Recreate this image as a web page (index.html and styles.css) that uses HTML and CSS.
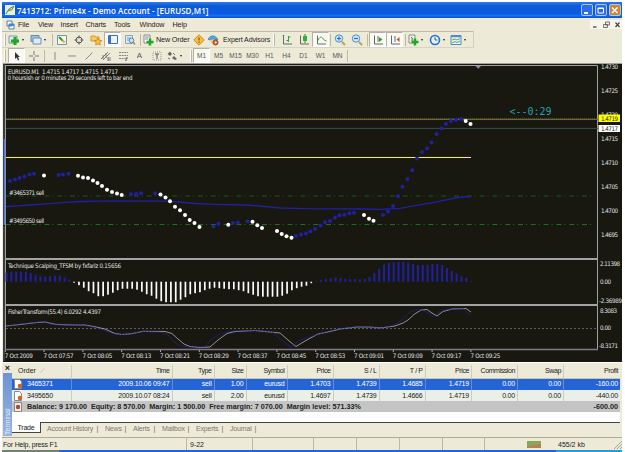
FILE: index.html
```
<!DOCTYPE html>
<html lang="en">
<head>
    <meta charset="UTF-8">
    <title>7413712: Prime4x - Demo Account - [EURUSD,M1]</title>
    <link rel="stylesheet" href="styles.css">
</head>
<body>
<div class="window">
    <header class="titlebar">
        <svg class="app-icon" width="10" height="10" viewBox="0 0 10 10"><rect width="10" height="10" fill="#e8efe4"/><path d="M1 9Q3 3 9 1Q8 5 3 6" fill="none" stroke="#4c8a3c"/><path d="M5 6l3-2" stroke="#d9a520"/></svg>
        <h1>7413712: Prime4x - Demo Account - [EURUSD,M1]</h1>
        <div class="controls">
            <button><svg width="11" height="12"><path d="M3 9h4" stroke="#fff" stroke-width="2"/></svg></button>
            <button><svg width="11" height="12"><path d="M3 4h5.500v5H3zM3 4.500h5.500" fill="none" stroke="#fff"/></svg></button>
            <button class="close"><svg width="11" height="12"><path d="M3 3.500l5.500 5.500M8.500 3.500L3 9" stroke="#fff" stroke-width="1.500"/></svg></button>
        </div>
    </header>

    <nav class="menu">
        <svg width="9" height="10" viewBox="0 0 9 10"><path d="M1 1h5v5H1zM3 4h5v5H3z" fill="#fff" stroke="#4a7fb8"/><path d="M3 5h5" stroke="#3a78c0" stroke-width="1.500"/></svg>
        <span class="w-file">File</span><span class="w-view">View</span><span class="w-insert">Insert</span><span class="w-charts">Charts</span><span class="w-tools">Tools</span><span class="w-window">Window</span><span>Help</span>
        <div class="mdi">
            <svg width="9" height="9"><path d="M3 7h3.500" stroke="#444" stroke-width="1.300"/></svg>
            <svg width="9" height="9"><path d="M3.500 2h4v3h-4zM1.500 4.500h4v3h-4z" fill="#f4f2e6" stroke="#555" stroke-width=".8"/></svg>
            <svg width="9" height="9"><path d="M2.500 2.500l4 4.500M6.500 2.500l-4 4.500" stroke="#444" stroke-width="1.200"/></svg>
        </div>
    </nav>

    <div class="toolbar">
        <i class="grip"></i>
        <span class="drop"><svg width="12" height="12"><path d="M1 2h8v7H1z" fill="#e2ecf0" stroke="#7c98a8"/><path d="M7 3v8M3 7h8" stroke="#21a821" stroke-width="3"/></svg></span>
        <span class="drop"><svg width="12" height="12"><path d="M1 1.500h8v6H1z" fill="#9cc4ec" stroke="#6088b0"/><path d="M3 4h8v6H3z" fill="#e0ecf8" stroke="#6890bc"/></svg></span>
        <i class="sep"></i>
        <span class="tool"><svg width="12" height="12"><path d="M1.500 1.500h9v9h-9z" fill="#f6f6ee" stroke="#7496a8"/><path d="M3 3l4 4" stroke="#2a9a38" stroke-width="2"/><path d="M6 5l4 3-3 1z" fill="#e8b020"/></svg></span>
        <span class="tool"><svg width="12" height="12"><circle cx="6" cy="6" r="3" fill="none" stroke="#555"/><path d="M6 1.500v3M6 7.500v3M1.500 6h3M7.500 6h3" stroke="#555"/></svg></span>
        <span class="tool"><svg width="12" height="12"><path d="M1 2h4l1 1h3v4H1z" fill="#f4cc60" stroke="#d89828"/><path d="M8 4l1.200 2.200 2.600.4-1.900 1.800.4 2.600L8 9.800 5.700 11l.4-2.600-1.900-1.800 2.600-.4z" fill="#f8c040" stroke="#c87818" stroke-width=".7"/></svg></span>
        <span class="tool pressed"><svg width="12" height="12"><path d="M1.500 1.500h9v8h-9z" fill="#eef4fc" stroke="#3c70b8"/><path d="M3 2v8" stroke="#3c70b8" stroke-width="2"/></svg></span>
        <span class="tool"><svg width="12" height="12"><path d="M1.500 1.500h7v8h-7z" fill="#dcebf2" stroke="#8aa6b8"/><path d="M3 4h4M3 6h3" stroke="#78a0c0"/><circle cx="7.500" cy="6.500" r="2.300" fill="#c8e4f4" stroke="#5888ac"/><path d="M9 8l2 2.500" stroke="#b8903c" stroke-width="1.500"/></svg></span>
        <i class="sep wide"></i>
        <span class="labelled order"><svg width="12" height="12"><path d="M2 1h6v8H2z" fill="#fff" stroke="#7c8c8c"/><path d="M3 3h4M3 5h3" stroke="#888"/><path d="M8 4.500v7M4.500 8h7" stroke="#21a821" stroke-width="2.500"/></svg>New Order</span>
        <span class="tool"><svg width="12" height="12"><path d="M6 .8L11.200 6 6 11.200.8 6z" fill="#f8c040" stroke="#d08820"/><path d="M6 3.500v3M6 7.500v1.300" stroke="#935510" stroke-width="1.300"/></svg></span>
        <span class="labelled expert"><svg width="13" height="12"><path d="M1 5q4-6 9-1l1 2-5-1-4 1z" fill="#58a8dc" stroke="#3880b8" stroke-width=".7"/><path d="M3 6h4v3H4z" fill="#f0c890"/><circle cx="8.500" cy="8.500" r="2.500" fill="#d87838" stroke="#984418"/><path d="M8 7.500l2 1-2 1z" fill="#fff"/></svg>Expert Advisors</span>
        <i class="grip later"></i>
        <span class="tool"><svg width="12" height="12"><path d="M2.500 1.500v8.500H11M2 2l.5-1 .5 1M5.500 6.500h2" fill="none" stroke="#557868"/><path d="M7.500 2v6M7.500 3h2" stroke="#38a048"/></svg></span>
        <span class="tool"><svg width="12" height="12"><path d="M2.500 1.500v8.500H11" fill="none" stroke="#666"/><path d="M7 0v9" stroke="#208830"/><path d="M5 2h4v5H5z" fill="#30b040"/></svg></span>
        <span class="tool pressed"><svg width="12" height="12"><path d="M2.500 1.500v8.500H11" fill="none" stroke="#667068"/><path d="M2.500 7q3-6 5-3 2 3 4 3" fill="none" stroke="#38a048"/></svg></span>
        <i class="sep"></i>
        <span class="tool"><svg width="12" height="12"><path d="M8 8l3 3" stroke="#c8a040" stroke-width="2"/><circle cx="5" cy="4.500" r="3.700" fill="#cde8fc" stroke="#4890d0"/><path d="M5 2.500v4M3 4.500h4" stroke="#2470b8" stroke-width="1.200"/></svg></span>
        <span class="tool"><svg width="12" height="12"><path d="M8 8l3 3" stroke="#c8a040" stroke-width="2"/><circle cx="5" cy="4.500" r="3.700" fill="#cde8fc" stroke="#4890d0"/><path d="M3 4.500h4" stroke="#2470b8" stroke-width="1.200"/></svg></span>
        <i class="sep wide"></i>
        <span class="tool pressed"><svg width="12" height="12"><path d="M2.500 1.500v8.500H11M6 2v6" fill="none" stroke="#666"/><path d="M7 3l3.500 2.500L7 8z" fill="#28a038"/></svg></span>
        <span class="tool pressed"><svg width="12" height="12"><path d="M2.500 1.500v8.500H11M6 2v6" fill="none" stroke="#557080"/><path d="M10.500 3L7.500 5.500l3 2.500z" fill="#c84828"/></svg></span>
        <i class="sep wide"></i>
        <span class="drop"><svg width="12" height="12"><path d="M2 1h6v8H2z" fill="#eef0e8" stroke="#889088"/><path d="M4 3q2 0 1 4" fill="none" stroke="#666"/><path d="M8 4.500v7M4.500 8h7" stroke="#21a821" stroke-width="2.500"/></svg></span>
        <span class="drop"><svg width="12" height="12"><circle cx="6" cy="6" r="4.500" fill="#e4f2fe" stroke="#2870c8" stroke-width="1.600"/><path d="M6 3v3h2.500" fill="none" stroke="#406080"/></svg></span>
        <span class="drop"><svg width="12" height="12"><path d="M1 1.500h10v9H1z" fill="#eef6f4" stroke="#5088c0"/><path d="M1 2.500h10" stroke="#5090cc" stroke-width="1.600"/><path d="M2 6l3-1 2 1 3-1.500M2 9l3-1.500 2 1L10 7" fill="none" stroke="#58a070"/></svg></span>
    </div>

    <div class="toolbar second">
        <i class="grip"></i>
        <span class="tool pressed"><svg width="12" height="12"><path d="M4 2v7l1.700-1.500L7 10.500l1.200-.6L7 7h2z" fill="#333"/></svg></span>
        <span class="tool"><svg width="12" height="12"><path d="M6 1v4M6 7v4M1 6h4M7 6h4" stroke="#777"/></svg></span>
        <i class="sep wide"></i>
        <span class="tool"><svg width="12" height="12"><path d="M6 2v8" stroke="#888"/></svg></span>
        <span class="tool"><svg width="12" height="12"><path d="M2 6h8" stroke="#888"/></svg></span>
        <span class="tool"><svg width="12" height="12"><path d="M2.500 9.500l7-7" stroke="#888"/></svg></span>
        <span class="tool"><svg width="12" height="12"><path d="M1 9l7-7M3 10l7-7M3 5v4M6 3v5M8 8h3M8 10h3M8 7v4" stroke="#666" stroke-width=".8"/></svg></span>
        <span class="tool"><svg width="12" height="12"><path d="M2 2.500h9M2 5.500h9M2 8.500h6" stroke="#888" stroke-dasharray="2 .6"/><path d="M9 8v3M9 8h2" stroke="#555"/></svg></span>
        <span class="tool letter">A</span>
        <span class="tool"><svg width="12" height="12"><path d="M2 2h8v8H2z" fill="none" stroke="#999" stroke-dasharray="1 1"/><path d="M4 4h4M6 4v5" stroke="#555"/></svg></span>
        <span class="drop arrows"><svg width="12" height="12"><path d="M1.500 4L4 1.500 6 4 4 6zM6 8l2-2 3 3-2 1z" fill="#666"/><path d="M7 3l2 2M2 8l2 1" stroke="#777"/></svg></span>
        <i class="grip periods"></i>
        <span class="tool pressed">M1</span><span class="tool">M5</span><span class="tool">M15</span><span class="tool">M30</span><span class="tool">H1</span><span class="tool">H4</span><span class="tool">D1</span><span class="tool">W1</span><span class="tool">MN</span>
        <i class="sep"></i>
    </div>

    <main class="chart">
        <svg id="chart" width="619" height="299" viewBox="3 63 619 299">
            <rect x="3" y="63" width="619" height="299" fill="#181810"/>
            <path class="frame" d="M3 63.500h619M5.500 65.500v284M5 65.500h592.500V349.500"/>
            <path class="edge" d="M4 64v75"/>
            <path class="edge-blue" d="M4.500 139v86"/>
            <path class="edge" d="M4 226v135"/>
            <path d="M475.500 66h5.500l-2.700 2.800z" fill="#8090a8"/>
            <path class="splitter" d="M5 259h592M5 305h592"/>
            <path d="M5 349.500h593" stroke="#82798a" stroke-width="1.300"/>

            <path d="M6 119.400h592" stroke="#706a2a" stroke-width="1.200"/>
            <path d="M6 118.400h592" stroke="#555a60" stroke-dasharray="1 1" stroke-width=".7"/>
            <path d="M6 128.400h592" stroke="#345050"/>
            <path class="order-line dim" d="M6 196h588"/>
            <path class="order-line" d="M6 224.500h588"/>
            <path d="M6 157.500h465" stroke="#ff0"/>
            <path class="average" d="M6 206.500L18 205.800 30 205 50 203.700 65 202.300 80 201.500 100 201.200 165 201.200 180 202 195 203.500 215 204.300 245 205 260 206 280 208 305 208.700 360 209 380 209.400 400 208.300 415 205.700 430 203.200 445 200.200 458 197.500 471 196.500"/>
            <g id="dots"></g>

            <g id="bars"></g>
            <path d="M6 328.500h592" stroke="#68685c" stroke-dasharray="2 2" stroke-width=".9"/>
            <path class="fisher" d="M6 326L20 324.500 35 322.700 45 322 55 324.300 65 324.800 85 325 95 326.800 105 329 115 333.500 122 334.500 132 333.700 143 331.300 165 331.500 172 333.500 178 339 184 344 190 346.500 200 347.500 210 347 218 340 227 333.500 235 331.500 255 330.500 280 333 288 340 296 346.500 305 341 318 334 330 331.500 340 329 357 327 370 327 380 328 395 326 403 323 408 320 414 314.500 421 310 427 309.500 432 313 437 316 443 311.500 452 309 466 308.500 471 312"/>
            <path class="fisher lead" d="M6 326.500L20 324 35 322.500 43 321.700 53 324.500 65 325 80 324.500 92 326.800 102 329.500 113 333.500 120 334.700 130 334 143 331.500 160 332 168 335 173 341 180 346 190 347 205 347 211 340 220 334 232 331 258 330.500 274 332.500 281 340 291 347 300 340 316 335 335 329.500 355 327 368 326.500 380 328.500 393 325.500 402 320 408 313.500 415 310 423 310 429 313.500 433 317 438 312.500 447 309.500 463 308.500 471 316"/>

            <g class="text">
                <text x="8" y="73.500" textLength="110">EURUSD.M1&#160; 1.4715 1.4717 1.4715 1.4717</text>
                <text x="7.500" y="80.300" textLength="125">0 hoursish or 0 minutes 29 seconds left to bar end</text>
                <text x="9" y="194.500" textLength="35">#3465371 sell</text>
                <text x="9" y="223" textLength="35">#3495650 sell</text>
                <text x="8" y="268" textLength="113">Technique Scalping_TFSM by fxfariz 0.15656</text>
                <text x="8" y="314" textLength="93">FisherTransform(55.4) 6.0292 4.4397</text>
                <text x="600" y="266" textLength="20">2.11398</text>
                <text x="600" y="284" textLength="11">0.00</text>
                <text x="599" y="303" textLength="23">-2.36989</text>
                <text x="600" y="312.500" textLength="17">8.3083</text>
                <text x="600" y="330" textLength="11">0.00</text>
                <text x="599" y="348" textLength="19">-8.3171</text>
            </g>
            <g class="text" id="prices"></g>
            <g class="text" id="times"></g>
            <path d="M598.500 114.500h21.500v7.500h-21.500z" fill="#ff0"/>
            <path d="M598.500 125h21.500v7h-21.500z" fill="#fff"/>
            <text class="tag" x="601" y="120.800" textLength="17">1.4719</text>
            <text class="tag" x="601" y="131" textLength="17">1.4717</text>
            <text class="countdown" x="509.500" y="115" textLength="42">&lt;--0:29</text>
        </svg>
    </main>

    <section class="terminal">
        <aside><b>×</b><span>Terminal</span></aside>
        <div class="panel">
            <table>
                <colgroup><col class="c-order"><col class="c-time"><col class="c-type"><col class="c-size"><col class="c-symbol"><col class="c-price"><col class="c-price"><col class="c-price"><col class="c-now"><col class="c-comm"><col class="c-price"><col></colgroup>
                <tr class="head"><th>Order<em>∕</em></th><th>Time</th><th>Type</th><th>Size</th><th>Symbol</th><th>Price</th><th>S / L</th><th>T / P</th><th>Price</th><th>Commission</th><th>Swap</th><th>Profit</th></tr>
                <tr class="selected"><td><svg width="9" height="10"><path d="M.5.500h5l2 2v7h-7z" fill="#fff" stroke="#888"/><circle cx="6" cy="7" r="2.300" fill="#d06428"/></svg>3465371</td><td>2009.10.06 09:47</td><td>sell</td><td>1.00</td><td>eurusd</td><td>1.4703</td><td>1.4739</td><td>1.4685</td><td>1.4719</td><td>0.00</td><td>0.00</td><td>-160.00</td></tr>
                <tr class="plain"><td><svg width="9" height="10"><path d="M.5.500h5l2 2v7h-7z" fill="#fff" stroke="#888"/><circle cx="6" cy="7" r="2.300" fill="#d06428"/></svg>3495650</td><td>2009.10.07 08:24</td><td>sell</td><td>2.00</td><td>eurusd</td><td>1.4697</td><td>1.4739</td><td>1.4666</td><td>1.4719</td><td>0.00</td><td>0.00</td><td>-440.00</td></tr>
            </table>
            <div class="balance">
                <svg width="9" height="10"><path d="M.5.500h7v9h-7z" fill="#f4f0ec" stroke="#888"/><circle cx="4" cy="5" r="2.200" fill="#c04028"/></svg>
                <span class="sums">Balance: 9 170.00&#160; Equity: 8 570.00&#160; Margin: 1 500.00&#160; Free margin: 7 070.00&#160; Margin level: 571.33%</span>
                <span class="total">-600.00</span>
            </div>
            <div class="blank"></div>
            <div class="tabs">
                <span class="active">Trade</span><span class="t-history">Account History</span><span class="t-news">News</span><span class="t-alerts">Alerts</span><span class="t-mail">Mailbox</span><span class="t-experts">Experts</span><span class="t-journal">Journal</span>
            </div>
        </div>
    </section>

    <footer class="status">
        <span class="help">For Help, press F1</span>
        <span class="profile">9-22</span>
        <span class="s1"></span><span class="s2"></span><span class="s3"></span><span class="s3"></span><span class="s4"></span>
        <span class="traffic">
            <svg width="15" height="8"><path d="M1 0v5M3 0v5M5 0v5M7 0v4M9 0v4M11 0v3M13 0v3" stroke="#5c8c20" stroke-width="1.400"/><path d="M1 5v2M3 5v2M5 5v2M7 4v3M9 4v3M11 3v4M13 3v4" stroke="#a85020" stroke-width="1.400"/></svg>
            455/2 kb
        </span>
        <svg class="resize" width="9" height="11"><path d="M1 11l8-8M4 11l5-5M7 11l2-2" stroke="#a8a494"/></svg>
    </footer>
    <div class="taskbar"><i class="start"></i><i class="tray"></i></div>
</div>
<script src="chart.js"></script>
</body>
</html>
```
FILE: styles.css
```
* {
    box-sizing: border-box;
}
body {
    margin: 0;
    background: #fff;
    font-family: "Liberation Sans", Arial, sans-serif;
    font-size: 7px;
    color: #222;
    overflow: hidden;
}
.window {
    width: 620px;
    height: 450px;
    margin: 2px 0 0 2px;
    background: #eeead8;
    display: flex;
    flex-direction: column;
}
svg {
    display: block;
    flex: none;
}

/* title and menu */
.titlebar {
    height: 16px;
    flex: none;
    display: flex;
    align-items: center;
    padding: 0 1px 0 2px;
    background: linear-gradient(#2c7cf0, #0c58d8 25%, #0c5ce0 75%, #1470f0 85%, #0c50c8);
}
h1 {
    margin: 0 auto 0 2px;
    color: #fff;
    font: 600 8px "Open Sans", "Noto Sans", sans-serif;
    letter-spacing: .05px;
    white-space: nowrap;
}
.app-icon {
    margin-left: 1px;
}
.controls {
    display: flex;
    gap: 2px;
}
.controls button {
    width: 12px;
    height: 12px;
    padding: 0;
    border: 1px solid #a8c8f8;
    border-radius: 2px;
    background: #2c6ce8;
    overflow: hidden;
}
.controls svg {
    margin: -1px;
}
.controls .close {
    background: #d8822c;
}
.menu {
    height: 13px;
    flex: none;
    display: flex;
    align-items: center;
    padding-left: 4px;
    font-size: 7.2px;
    letter-spacing: -.1px;
}
.menu > svg {
    margin-right: 3px;
}
.w-file { width: 20px; }
.w-view { width: 22.500px; }
.w-insert { width: 25px; }
.w-charts { width: 28.500px; }
.w-tools { width: 25.500px; }
.w-window { width: 33px; }
.mdi {
    display: flex;
    gap: 2.500px;
    margin-left: auto;
    background: #f8f6ec;
}

/* toolbars */
.toolbar {
    height: 16px;
    width: 472px;
    flex: none;
    display: flex;
    align-items: center;
    border-top: 1px solid #c8b8a8;
    border-right: 1px solid #d4d0c0;
    padding-left: 2px;
}
.toolbar.second {
    border-top-color: #d8d4c4;
    border-right: 0;
}
.grip {
    width: 2px;
    height: 12px;
    margin-right: 2px;
    border-left: 1px solid #fff;
    border-right: 1px solid #b8b4a4;
}
.grip.later {
    margin: 0 3px 0 1px;
}
.grip.periods {
    margin: 0 1px 0 2px;
}
.sep {
    width: 1px;
    height: 12px;
    margin: 0 .5px;
    background: #bcb8a8;
}
.sep.wide {
    margin: 0 1.500px;
}
.tool {
    width: 17px;
    height: 15px;
    flex: none;
    display: flex;
    align-items: center;
    justify-content: center;
    color: #555;
    font-size: 6.500px;
}
.tool.letter {
    font-size: 8px;
}
.tool.pressed {
    background: #faf9f2;
    border: 1px solid #b4b0a4;
    border-right-color: #fff;
    border-bottom-color: #fff;
}
.drop {
    width: 21.500px;
    flex: none;
    display: flex;
    align-items: center;
    gap: 2px;
}
.drop::after {
    content: "";
    border: 1.800px solid transparent;
    border-top: 2.200px solid #222;
    border-bottom: 0;
}
.arrows {
    width: 23px;
    padding-left: 1px;
}
.labelled {
    display: flex;
    align-items: center;
    gap: 2px;
    flex: none;
    white-space: nowrap;
}
.order {
    width: 48px;
    font-size: 7.200px;
    letter-spacing: -.15px;
}
.expert {
    width: 65px;
    font-size: 7px;
    letter-spacing: -.1px;
    gap: 3px;
}

/* chart */
.chart {
    height: 299px;
    flex: none;
    margin-left: 1px;
}
.frame {
    fill: none;
    stroke: #a0a0a0;
}
.edge {
    stroke: #606060;
}
.edge-blue {
    stroke: #5878c8;
    stroke-width: 2;
}
.splitter {
    stroke: #a4a4a4;
    stroke-width: 1.800;
}
.order-line {
    stroke: #1c701c;
    stroke-dasharray: 5 3 1 3.800;
}
.order-line.dim {
    stroke: #154418;
    stroke-width: 1.600;
}
.average {
    fill: none;
    stroke: #2020a0;
    stroke-width: 1.300;
}
.fisher {
    fill: none;
    stroke: #b0b0b4;
    stroke-width: .8;
}
.fisher.lead {
    stroke: #2424c0;
    stroke-dasharray: 2 1;
}
.text, .tag {
    font: 6.200px "DejaVu Sans Condensed", "DejaVu Sans", sans-serif;
    fill: #e2e2e2;
}
.tag {
    fill: #222;
}
.countdown {
    font: 10px "DejaVu Sans Mono", monospace;
    fill: #2aa0a8;
}
.blue {
    fill: #2020a0;
}
.white {
    fill: #fff;
}

/* terminal */
.terminal {
    height: 75px;
    flex: none;
    display: flex;
    padding: 2px 2px 0 1px;
    border-top: 1px solid #fff;
}
aside {
    width: 9px;
    flex: none;
    display: flex;
    flex-direction: column;
}
aside b {
    height: 8px;
    font-size: 9px;
    line-height: 6px;
    text-align: center;
}
aside span {
    flex: 1;
    margin-bottom: 1px;
    background: linear-gradient(#98b4e0, #6c94d4);
    color: #e4ecfa;
    writing-mode: vertical-rl;
    transform: rotate(180deg);
    line-height: 9px;
    font-size: 7px;
    padding-top: 1px;
}
.panel {
    flex: 1;
    min-width: 0;
}
table {
    width: 608px;
    table-layout: fixed;
    border-collapse: collapse;
}
.c-order { width: 59.500px; }
.c-time { width: 100.500px; }
.c-type { width: 42px; }
.c-size { width: 32px; }
.c-symbol { width: 41px; }
.c-price { width: 46px; }
.c-now { width: 46.500px; }
.c-comm { width: 46px; }
th, td {
    height: 11.700px;
    padding: 0 2px 0 0;
    border-right: 1px solid #d0ccbc;
    text-align: right;
    font-weight: normal;
    font-size: 7px;
    letter-spacing: -.2px;
    line-height: 10px;
    white-space: nowrap;
    overflow: hidden;
}
th {
    letter-spacing: -.4px;
}
th:first-child {
    padding-left: 6px;
    text-align: left;
    letter-spacing: 0;
}
th em {
    color: #aaa;
    margin-left: 6px;
}
td:first-child {
    padding-left: 2px;
    text-align: left;
}
td svg {
    float: left;
    margin-right: 4px;
}
.head th {
    height: 13px;
    border-bottom: 1px solid #c8c4b4;
}
.selected td {
    background: #2464d4;
    color: #fff;
    border-color: #5c8ce4;
}
.plain td {
    background: #ecefe8;
}
th:last-child, td:last-child {
    border-right: 0;
}
.balance {
    height: 11px;
    display: flex;
    align-items: center;
    background: #c4c4c4;
    padding: 0 2px;
    font-weight: bold;
    font-size: 7.200px;
    white-space: nowrap;
}
.sums {
    margin-left: 4px;
}
.total {
    margin-left: auto;
}
.blank {
    height: 10px;
    background: #fff;
}
.tabs {
    display: flex;
    height: 12px;
    border-top: 1px solid #444;
    color: #7c786c;
    line-height: 11px;
    font-size: 7px;
    letter-spacing: -.2px;
}
.tabs span {
    white-space: nowrap;
}
.tabs .active {
    width: 29px;
    height: 11px;
    margin-top: -1px;
    background: #fff;
    color: #222;
    text-align: center;
    border-right: 1px solid #444;
    border-bottom: 1px solid #444;
}
.tabs span + span {
    padding: 0 1px 0 6px;
}
.tabs span + span::after {
    content: "|";
    float: right;
    color: #666;
}
.t-history { width: 58px; }
.t-news { width: 28px; }
.t-alerts { width: 29px; }
.t-mail { width: 34px; }
.t-experts { width: 34px; }
.t-journal { width: 33px; }

/* status */
.status {
    height: 13px;
    flex: none;
    display: flex;
    border-top: 1px solid #b0ac9c;
    line-height: 14px;
    font-size: 7px;
    white-space: nowrap;
}
.status > span {
    border-right: 1px solid #bcb8a8;
    height: 12px;
}
.help { width: 185px; padding-left: 1px; letter-spacing: -.2px; }
.profile { width: 66px; padding-left: 3px; }
.s1 { width: 61px; }
.s2 { width: 43px; }
.s3 { width: 43px; }
.s4 { width: 42px; }
.status .traffic {
    flex: 1;
    border: 0;
    display: flex;
    padding-left: 42px;
    gap: 16px;
}
.traffic svg {
    margin-top: 3px;
}
.taskbar {
    height: 2px;
    display: flex;
    justify-content: space-between;
    background: #1468e4;
}
.start {
    width: 57px;
    background: #6c8478;
}
.tray {
    width: 66px;
    background: #18a0f0;
}
```
FILE: chart.js
```
const NS = 'http://www.w3.org/2000/svg';

function add(parent, tag, attrs, text) {
    const el = document.createElementNS(NS, tag);
    for (const key in attrs) el.setAttribute(key, attrs[key]);
    if (text) el.textContent = text;
    document.getElementById(parent).appendChild(el);
}

// trend dots, in runs of one colour
const runs = [
    ['blue', [[10,181],[15,179.5],[19.5,178],[24.5,176.5],[29.5,174.5],[34,173.7]]],
    ['white', [[44,175.5]]],
    ['blue', [[58.5,175],[63,174.5],[68.5,173.7]]],
    ['white', [[78,175.7],[83,177.5],[88,178],[93,180.5],[97.5,183],[102,186],[107,189.7],[112,192],[117,193.5],[121.7,195]]],
    ['blue', [[131,194.3],[136,194],[141,193.2],[155,193.3]]],
    ['white', [[160.5,194.5],[165.5,197.5],[170,201.2],[175,206.7],[180,210.2],[185,215],[189.7,220],[194.5,223],[199.5,227]]],
    ['blue', [[213.5,226.5],[218.5,223.7]]],
    ['white', [[228.3,224.7]]],
    ['blue', [[233,223],[238,222.5],[247.5,221.3]]],
    ['white', [[252.5,221.7],[257.3,225.3],[262,228],[277,231],[281.7,234],[286.5,236.3],[291.5,237.7]]],
    ['blue', [[296,236],[301,234.5],[306,233.5],[310.5,231.5],[315,228.7],[320.5,225.5],[325,222.3],[330,221],[335,217.5],[339.5,215.2],[344.5,214.7],[349.5,213.3],[354,212.7]]],
    ['white', [[364,215],[369,218.7],[373.5,220.7]]],
    ['blue', [[383,215],[388,211.5],[393,206],[398,196.3],[402.5,186.7],[407.5,179],[412.3,170.3],[417,158.5],[422,152],[427,148.5],[431.5,142.5],[436.5,134],[441.5,128.5],[446,124],[451,121],[456,120],[461,119]]],
    ['white', [[465.7,121],[470.5,124]]]
];
for (const [color, points] of runs) {
    for (const [x, y] of points) add('dots', 'circle', { class: color, cx: x, cy: y, r: 2 });
}

// histogram
const bars = [9,10,10,10,10,8.5,7,5.5,5,5.5,6,6,4,2,-1,-3.5,-6,-9.5,-11.5,-14.5,-14.5,-13,-11,-8.5,-7,-7,-7,-8,-10,-12.5,
    -14,-17,-19.5,-20.5,-20.5,-20.5,-18,-15.5,-12.5,-11.5,-10.5,-8.5,-7,-6,-6.5,-7,-7.5,-7.5,-8.5,-9.5,-11.5,-13,-14.5,
    -15,-15,-15,-15,-14,-12,-8.5,-6.5,-5,-4,-1.5,.8,1.8,2.8,3.2,4.2,3.7,2.7,2.5,2.7,2.2,2.7,4.7,8.7,12.7,17.2,18.7,19.4,
    19.7,19.7,19.2,17.7,16.7,16.7,16.7,17.7,17.7,16.7,13.7,10.7,8.2,5.7,3.7,.8];
bars.forEach((v, i) => {
    add('bars', 'rect', {
        class: v > 0 ? 'blue' : 'white',
        x: 5.5 + i * 4.84,
        y: v > 0 ? 281.7 - v : 281.7,
        width: v > 0 ? 2 : 1.7,
        height: Math.abs(v)
    });
});

// price scale
const prices = ['1.4730', '1.4725', '1.4720', '1.4715', '1.4710', '1.4705', '1.4700', '1.4695'];
prices.forEach((p, i) => {
    add('prices', 'text', { x: 601, y: 68.7 + i * 24, textLength: 17 }, p);
});

// time scale
const times = ['2009', '07:57', '08:05', '08:13', '08:21', '08:29', '08:37', '08:45', '08:53', '09:01', '09:09', '09:17', '09:25'];
times.forEach((t, i) => {
    const x = 5.3 + i * 38.8;
    add('times', 'path', { d: 'M' + x + ' 350v2', stroke: '#aaa' });
    add('times', 'text', { x: x - .5, y: 358, textLength: i ? 30 : 28 }, '7 Oct ' + t);
});
```
